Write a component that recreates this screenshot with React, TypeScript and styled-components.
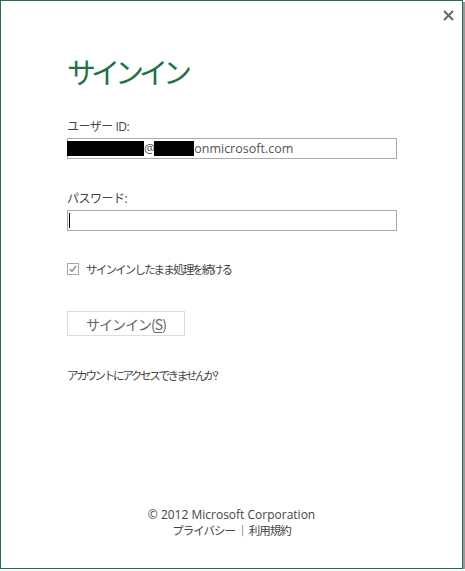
import React from "react";
import styled, { createGlobalStyle } from "styled-components";

const Global = createGlobalStyle`
  html, body { margin: 0; padding: 0; background: #ffffff; }
  body { font-family: "Open Sans", "Noto Sans", "Noto Sans CJK JP", sans-serif; }
`;

const Dialog = styled.div`
  position: relative;
  box-sizing: border-box;
  width: 463px;
  height: 569px;
  border: 1px solid #217346;
  box-shadow: 2px 2px 0 #9a9a9a;
  background: #fff;
  display: flex;
  flex-direction: column;
  padding: 0 0 0 66px;
  color: #444;
  font-size: 12px;
`;

const Close = styled.button`
  position: absolute;
  top: 6px;
  right: 6px;
  width: 16px;
  height: 16px;
  padding: 0;
  border: 0;
  background: transparent;
  display: flex;
  align-items: center;
  justify-content: center;
`;

const Title = styled.h1`
  margin: 50px 0 0 0;
  font-family: "Noto Sans CJK JP", sans-serif;
  font-weight: 400;
  font-size: 29px;
  letter-spacing: -5px;
  line-height: 40px;
  color: #217346;
`;

const Label = styled.div<{ $top: number }>`
  margin-top: ${(p) => p.$top}px;
  font-family: "Open Sans", "Noto Sans CJK JP", sans-serif;
  font-size: 12px;
  line-height: 16px;
  letter-spacing: -0.5px;
  color: #444;
`;

const Field = styled.div`
  box-sizing: border-box;
  margin-top: 3px;
  width: 330px;
  height: 21px;
  border: 1px solid #ababab;
  display: flex;
  align-items: center;
  padding-left: 0;
  font-family: "Open Sans", sans-serif;
  font-size: 12.5px;
  color: #555;
`;

const Redact = styled.span<{ $w: number }>`
  display: inline-block;
  width: ${(p) => p.$w}px;
  height: 15px;
  background: #000;
  margin-left: -1px;
`;

const Caret = styled.span`
  display: inline-block;
  width: 1px;
  height: 15px;
  background: #000;
  margin-left: 1px;
`;

const CheckRow = styled.label`
  margin-top: 30px;
  display: flex;
  align-items: center;
  gap: 7px;
  font-family: "Noto Sans CJK JP", sans-serif;
  font-size: 11.5px;
  letter-spacing: -1.8px;
  color: #444;
`;

const Box = styled.span`
  box-sizing: border-box;
  width: 12px;
  height: 12px;
  border: 1px solid #a5a5a5;
  display: flex;
  align-items: center;
  justify-content: center;
`;

const Button = styled.button`
  margin-top: 34px;
  box-sizing: border-box;
  width: 118px;
  height: 25px;
  border: 1px solid #dcdcdc;
  background: #fff;
  font-family: "Noto Sans CJK JP", sans-serif;
  font-size: 14px;
  letter-spacing: -1px;
  color: #666;
  padding: 0;
  u { text-decoration: underline; text-underline-offset: 2px; }
`;

const Help = styled.div`
  margin-top: 31px;
  font-family: "Noto Sans CJK JP", sans-serif;
  font-size: 11.5px;
  letter-spacing: -2.3px;
  color: #444;
`;

const Footer = styled.div`
  margin-top: auto;
  margin-left: -66px;
  padding-bottom: 30px;
  display: flex;
  flex-direction: column;
  align-items: center;
  font-family: "Open Sans", "Noto Sans CJK JP", sans-serif;
  font-size: 12px;
  line-height: 15px;
  color: #444;
`;

const Links = styled.div`
  font-family: "Noto Sans CJK JP", sans-serif;
  font-size: 11.5px;
  letter-spacing: -1px;
  line-height: 16px;
`;

export default function App() {
  return (
    <>
      <Global />
      <Dialog>
        <Close aria-label="close">
          <svg width="11" height="11" viewBox="0 0 11 11">
            <path d="M1 1 L10 10 M10 1 L1 10" stroke="#666" strokeWidth="2" />
          </svg>
        </Close>
        <Title>サインイン</Title>
        <Label $top={28}>ユーザー ID:</Label>
        <Field>
          <Redact $w={77} />
          <span>@</span>
          <Redact $w={40} />
          <span>onmicrosoft.com</span>
        </Field>
        <Label $top={32}>パスワード:</Label>
        <Field>
          <Caret />
        </Field>
        <CheckRow>
          <Box>
            <svg width="10" height="10" viewBox="0 0 10 10">
              <path d="M2 5 L4 7.5 L8 2" stroke="#8a8a8a" strokeWidth="1.3" fill="none" />
            </svg>
          </Box>
          サインインしたまま処理を続ける
        </CheckRow>
        <Button>
          サインイン(<u>S</u>)
        </Button>
        <Help>アカウントにアクセスできませんか?</Help>
        <Footer>
          <div>© 2012 Microsoft Corporation</div>
          <Links>プライバシー ｜ 利用規約</Links>
        </Footer>
      </Dialog>
    </>
  );
}
